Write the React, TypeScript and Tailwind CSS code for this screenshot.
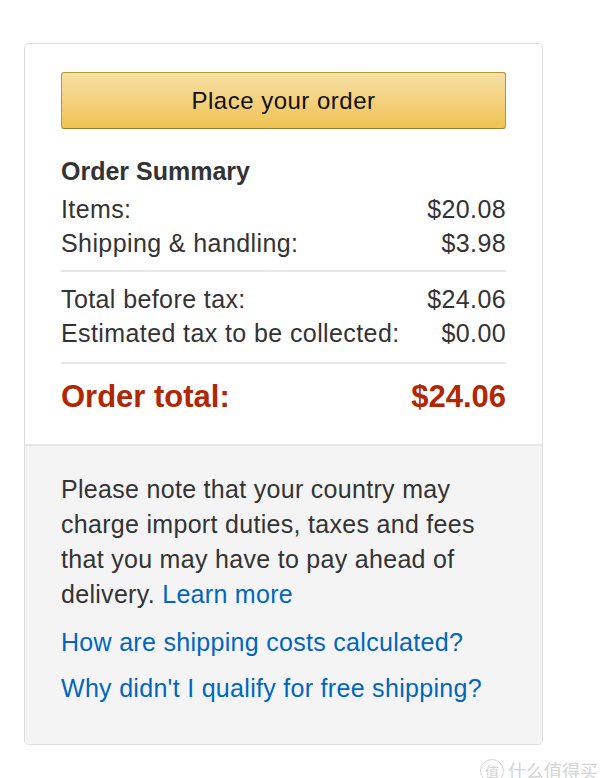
import React, { FC } from "react";

// Types
interface Line {
  label: string;
  amount: string;
}

const summaryTop: Line[] = [
  { label: "Items:", amount: "$20.08" },
  { label: "Shipping & handling:", amount: "$3.98" },
];

const summaryTax: Line[] = [
  { label: "Total before tax:", amount: "$24.06" },
  { label: "Estimated tax to be collected:", amount: "$0.00" },
];

const Row: FC<{ line: Line }> = ({ line }) => (
  <div className="flex justify-between h-[34px] leading-[34px] text-[25px] tracking-[0.4px] text-[#333]">
    <span>{line.label}</span>
    <span>{line.amount}</span>
  </div>
);

const App: FC = () => {
  return (
    <div
      className="w-[600px] h-[778px] bg-white overflow-hidden"
      style={{ fontFamily: '"Liberation Sans", Arial, sans-serif' }}
    >
      <div className="pt-[43px] pl-[24px]">
        <div className="w-[519px] border border-[#dddddd] rounded-[5px] overflow-hidden">
          {/* Top: button + summary */}
          <div className="px-[36px] pt-[28px] pb-[27px] bg-white">
            <button className="w-full h-[57px] rounded-[3px] border border-[#b8952f] border-b-[#9c7e31] bg-gradient-to-b from-[#f7e0a4] to-[#efc250] text-[24px] tracking-[0.5px] text-[#111]">
              Place your order
            </button>

            <h3 className="mt-[25px] mb-[4px] h-[34px] leading-[34px] text-[25px] font-bold text-[#333]">
              Order Summary
            </h3>
            {summaryTop.map((l) => (
              <Row key={l.label} line={l} />
            ))}

            <div className="mt-[10px] mb-[10px] h-[2px] bg-[#e7e7e7]" />

            {summaryTax.map((l) => (
              <Row key={l.label} line={l} />
            ))}

            <div className="mt-[12px] mb-[13px] h-[2px] bg-[#e7e7e7]" />

            <div className="flex justify-between h-[40px] leading-[40px] text-[31px] font-bold text-[#b12704]">
              <span>Order total:</span>
              <span>$24.06</span>
            </div>
          </div>

          {/* Bottom: import note + links */}
          <div className="border-t-2 border-[#e7e7e7] bg-[#f4f4f4] px-[36px] pt-[26px] pb-[38px] text-[25px] tracking-[0.3px]">
            <p className="leading-[35px] text-[#333] pr-[20px]">
              Please note that your country may charge import duties, taxes and
              fees that you may have to pay ahead of delivery.{" "}
              <a className="text-[#0066c0]">Learn more</a>
            </p>
            <p className="mt-[13px] leading-[35px] text-[#0066c0]">
              How are shipping costs calculated?
            </p>
            <p className="mt-[11px] leading-[35px] text-[#0066c0]">
              Why didn't I qualify for free shipping?
            </p>
          </div>
        </div>
      </div>

      {/* Watermark */}
      <div
        className="flex justify-end items-center gap-[4px] pr-[2px] mt-[12px] text-[18px] text-[#d4d4d4]"
        style={{ fontFamily: '"Noto Sans CJK SC", sans-serif' }}
      >
        <span className="w-[24px] h-[24px] rounded-full border border-[#d4d4d4] flex items-center justify-center text-[14px] leading-none">
          值
        </span>
        <span>什么值得买</span>
      </div>
    </div>
  );
};

export default App;
